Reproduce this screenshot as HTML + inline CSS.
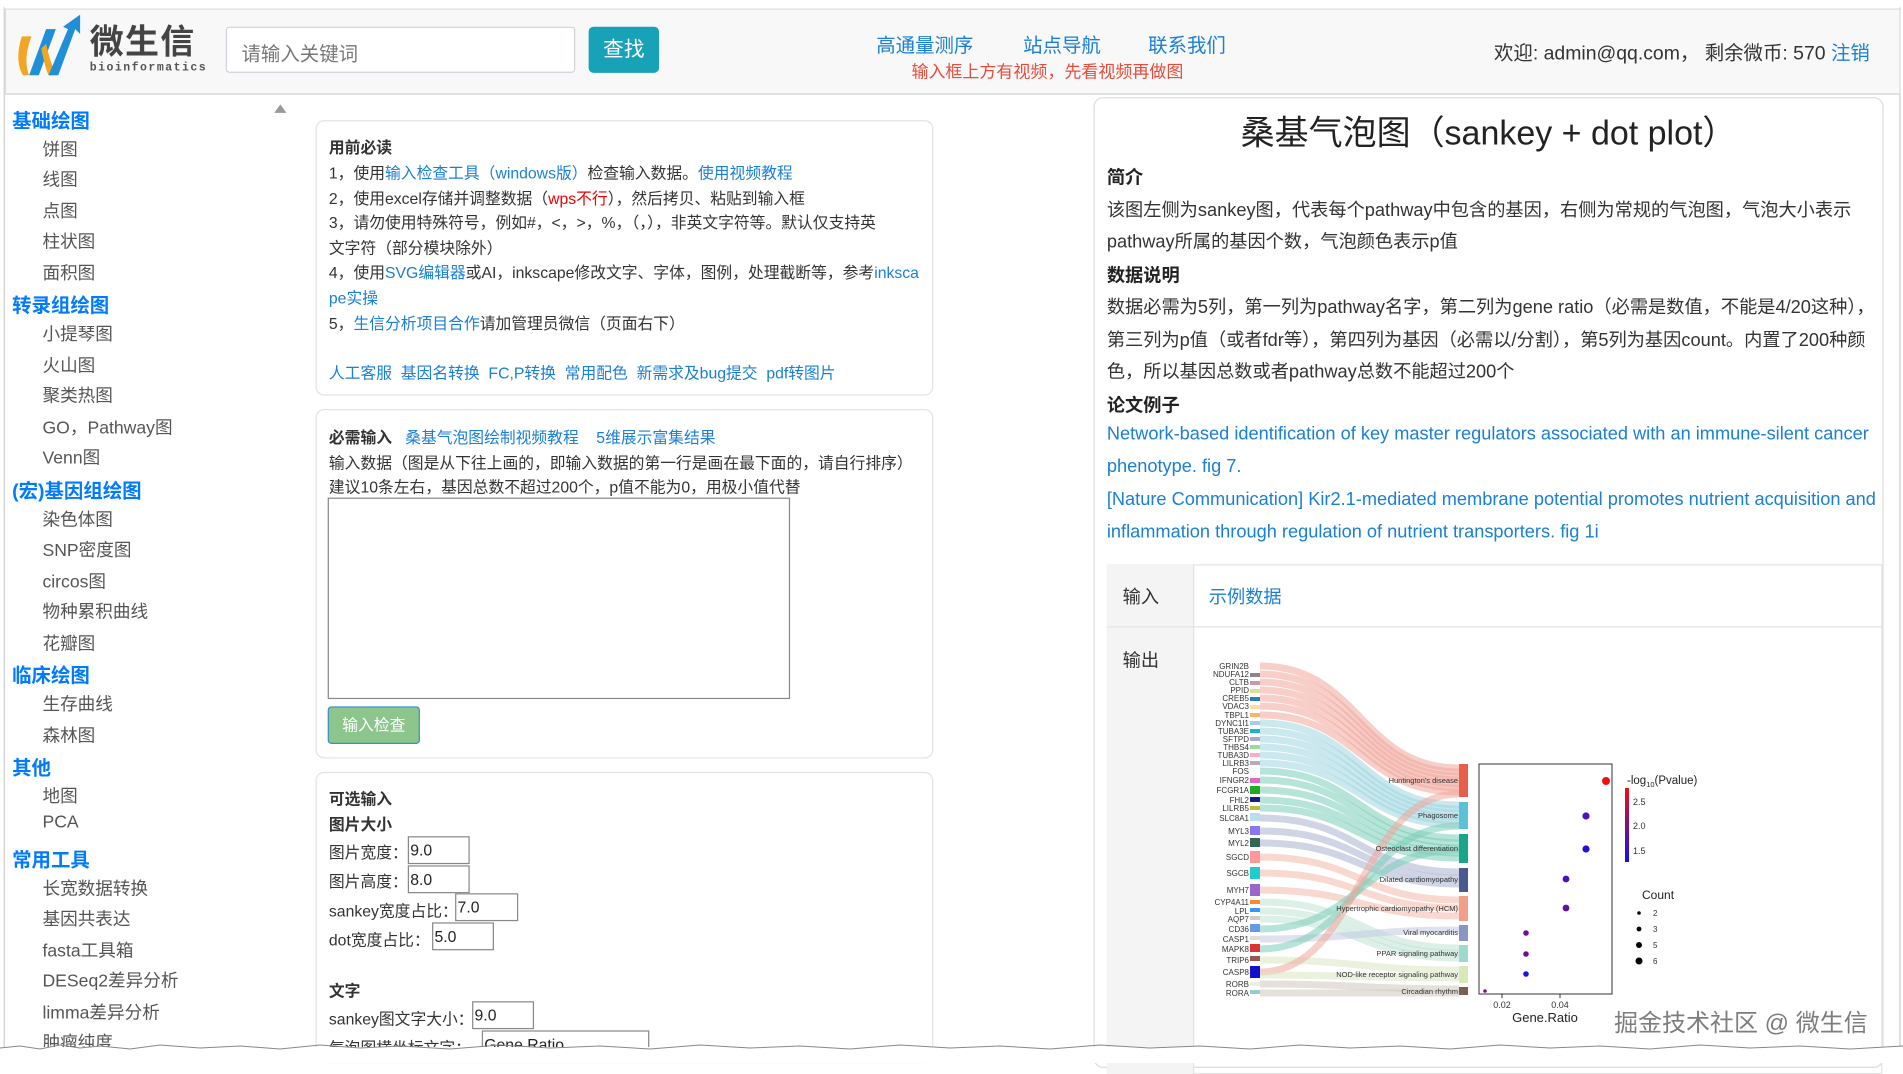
<!DOCTYPE html>
<html><head><meta charset="utf-8">
<style>
*{box-sizing:border-box;margin:0;padding:0}
body{width:1903px;height:1063px;overflow:hidden;background:#fff;font-family:"Liberation Sans","Noto Sans CJK SC",sans-serif;position:relative}
#w{position:absolute;left:0;top:0;width:1568px;height:876px;transform:scale(1.21365);transform-origin:0 0}
.a{position:absolute;white-space:nowrap}
.lk{color:#1a7fd6 !important}
#hdr{position:absolute;left:4px;top:7px;width:1562px;height:71px;background:#f8f8f8;border:1px solid #ddd;border-bottom:1px solid #d0d0d0}
.side-h{position:absolute;left:10px;font-size:16px;font-weight:bold;color:#007bff}
.side-i{position:absolute;left:35px;font-size:14.5px;color:#555}
.card{position:absolute;left:260px;width:509px;border:1px solid #e3e3e3;border-radius:7px;background:#fff}
.t{position:absolute;left:271px;font-size:13px;color:#333;white-space:nowrap}
.inp{position:absolute;height:23px;border:1px solid #888;background:#fff;font-size:13px;padding:3px 1px;color:#222}
.r{position:absolute;left:912px;font-size:15px;color:#333;white-space:nowrap}
.rb{font-weight:bold;color:#222}
</style></head><body>
<div id="w">
<div style="position:absolute;left:3px;top:6px;width:1563px;height:860px;border-left:1px solid #ccc;border-right:1px solid #ccc"></div>
<div id="hdr"></div>
<svg class="a" style="left:10px;top:10px" width="60" height="56" viewBox="0 0 60 56">
<path d="M8 20 C4 32 4 44 9 52 L14 52 C10 42 12 30 16 20 Z" fill="#f2a623"/>
<path d="M14 52 L28 14 L36 14 L22 52 Z" fill="#1f8fd8"/>
<path d="M24 30 C26 40 28 48 30 52 L36 52 C33 44 30 36 28 26 Z" fill="#f2a623"/>
<path d="M30 52 L46 14 L42 12 L56 2 L56 18 L52 14 L38 52 Z" fill="#1f8fd8"/>
</svg>
<div class="a" style="left:74px;top:13px;font-size:28px;font-weight:bold;color:#444;letter-spacing:1px">微生信</div>
<div class="a" style="left:74px;top:50px;font-size:9.5px;font-weight:bold;color:#555;letter-spacing:1.2px;font-family:'Liberation Mono',monospace">bioinformatics</div>
<div class="a" style="left:186px;top:22px;width:288px;height:38px;border:1px solid #ced4da;background:#fff;border-radius:3px;font-size:16px;color:#777;padding:8px 12px">请输入关键词</div>
<div class="a" style="left:485px;top:22px;width:58px;height:38px;background:#17a2b8;border-radius:4px;color:#fff;font-size:17px;text-align:center;line-height:38px">查找</div>
<div class="a lk" style="left:722px;top:24px;font-size:16px">高通量测序</div>
<div class="a lk" style="left:843px;top:24px;font-size:16px">站点导航</div>
<div class="a lk" style="left:946px;top:24px;font-size:16px">联系我们</div>
<div class="a" style="left:751px;top:49px;font-size:14px;color:#e74c3c">输入框上方有视频，先看视频再做图</div>
<div class="a" style="left:1231px;top:30px;font-size:16px;color:#333">欢迎: admin@qq.com， 剩余微币: 570 <span class="lk">注销</span></div>

<!-- sidebar -->
<div class="a" style="left:226px;top:86px;width:0;height:0;border-left:5px solid transparent;border-right:5px solid transparent;border-bottom:7px solid #999"></div>
<div class="side-h" style="top:86px">基础绘图</div>
<div class="side-i" style="top:112px">饼图</div>
<div class="side-i" style="top:137px">线图</div>
<div class="side-i" style="top:163px">点图</div>
<div class="side-i" style="top:188px">柱状图</div>
<div class="side-i" style="top:214px">面积图</div>
<div class="side-h" style="top:238px">转录组绘图</div>
<div class="side-i" style="top:264px">小提琴图</div>
<div class="side-i" style="top:290px">火山图</div>
<div class="side-i" style="top:315px">聚类热图</div>
<div class="side-i" style="top:341px">GO，Pathway图</div>
<div class="side-i" style="top:366px">Venn图</div>
<div class="side-h" style="top:391px">(宏)基因组绘图</div>
<div class="side-i" style="top:417px">染色体图</div>
<div class="side-i" style="top:442px">SNP密度图</div>
<div class="side-i" style="top:468px">circos图</div>
<div class="side-i" style="top:493px">物种累积曲线</div>
<div class="side-i" style="top:519px">花瓣图</div>
<div class="side-h" style="top:543px">临床绘图</div>
<div class="side-i" style="top:569px">生存曲线</div>
<div class="side-i" style="top:595px">森林图</div>
<div class="side-h" style="top:619px">其他</div>
<div class="side-i" style="top:645px">地图</div>
<div class="side-i" style="top:670px">PCA</div>
<div class="side-h" style="top:695px">常用工具</div>
<div class="side-i" style="top:721px">长宽数据转换</div>
<div class="side-i" style="top:746px">基因共表达</div>
<div class="side-i" style="top:772px">fasta工具箱</div>
<div class="side-i" style="top:797px">DESeq2差异分析</div>
<div class="side-i" style="top:823px">limma差异分析</div>
<div class="side-i" style="top:848px">肿瘤纯度</div>

<!-- middle -->
<div class="card" style="top:99px;height:227px"></div>
<div class="t" style="top:111px;font-weight:bold">用前必读</div>
<div class="t" style="top:132px">1，使用<span class="lk">输入检查工具（windows版）</span>检查输入数据。<span class="lk">使用视频教程</span></div>
<div class="t" style="top:153px">2，使用excel存储并调整数据（<span style="color:#e00">wps不行</span>），然后拷贝、粘贴到输入框</div>
<div class="t" style="top:173px">3，请勿使用特殊符号，例如#，&lt;，&gt;，%，（，），非英文字符等。默认仅支持英</div>
<div class="t" style="top:194px">文字符（部分模块除外）</div>
<div class="t" style="top:214px">4，使用<span class="lk">SVG编辑器</span>或AI，inkscape修改文字、字体，图例，处理截断等，参考<span class="lk">inksca</span></div>
<div class="t lk" style="top:235px">pe实操</div>
<div class="t" style="top:256px">5，<span class="lk">生信分析项目合作</span>请加管理员微信（页面右下）</div>
<div class="t lk" style="top:297px">人工客服 &nbsp;基因名转换 &nbsp;FC,P转换 &nbsp;常用配色 &nbsp;新需求及bug提交 &nbsp;pdf转图片</div>

<div class="card" style="top:337px;height:288px"></div>
<div class="t" style="top:350px"><b>必需输入</b> &nbsp;&nbsp;<span class="lk">桑基气泡图绘制视频教程</span> &nbsp;&nbsp;&nbsp;<span class="lk">5维展示富集结果</span></div>
<div class="t" style="top:371px">输入数据（图是从下往上画的，即输入数据的第一行是画在最下面的，请自行排序）</div>
<div class="t" style="top:391px">建议10条左右，基因总数不超过200个，p值不能为0，用极小值代替</div>
<div class="a" style="left:270px;top:410px;width:381px;height:166px;border:1px solid #888;background:#fff"></div>
<div class="a" style="left:270px;top:582px;width:76px;height:31px;background:#8cc68c;border:1px solid #3b8fc4;border-radius:3px;color:#fff;font-size:13px;text-align:center;line-height:29px">输入检查</div>

<div class="card" style="top:636px;height:240px"></div>
<div class="t" style="top:648px;font-weight:bold">可选输入</div>
<div class="t" style="top:669px;font-weight:bold">图片大小</div>
<div class="t" style="top:692px">图片宽度：</div><div class="inp" style="left:336px;top:689px;width:51px">9.0</div>
<div class="t" style="top:716px">图片高度：</div><div class="inp" style="left:336px;top:713px;width:51px">8.0</div>
<div class="t" style="top:740px">sankey宽度占比：</div><div class="inp" style="left:375px;top:736px;width:52px">7.0</div>
<div class="t" style="top:764px">dot宽度占比：</div><div class="inp" style="left:356px;top:760px;width:51px">5.0</div>
<div class="t" style="top:806px;font-weight:bold">文字</div>
<div class="t" style="top:829px">sankey图文字大小：</div><div class="inp" style="left:389px;top:825px;width:51px">9.0</div>
<div class="t" style="top:853px">气泡图横坐标文字：</div><div class="inp" style="left:397px;top:849px;width:138px">Gene.Ratio</div>

<!-- right -->
<div class="a" style="left:901px;top:80px;width:651px;height:800px;border:1px solid #ddd;border-radius:8px;background:#fff"></div>
<div class="a" style="left:901px;top:88px;width:651px;text-align:center;font-size:28px;color:#222">桑基气泡图（sankey + dot plot）</div>
<div class="r rb" style="top:135px">简介</div>
<div class="r" style="top:162px">该图左侧为sankey图，代表每个pathway中包含的基因，右侧为常规的气泡图，气泡大小表示</div>
<div class="r" style="top:188px">pathway所属的基因个数，气泡颜色表示p值</div>
<div class="r rb" style="top:216px">数据说明</div>
<div class="r" style="top:242px">数据必需为5列，第一列为pathway名字，第二列为gene ratio（必需是数值，不能是4/20这种），</div>
<div class="r" style="top:269px">第三列为p值（或者fdr等），第四列为基因（必需以/分割），第5列为基因count。内置了200种颜</div>
<div class="r" style="top:295px">色，所以基因总数或者pathway总数不能超过200个</div>
<div class="r rb" style="top:323px">论文例子</div>
<div class="r lk" style="top:349px">Network-based identification of key master regulators associated with an immune-silent cancer</div>
<div class="r lk" style="top:376px">phenotype. fig 7.</div>
<div class="r lk" style="top:403px">[Nature Communication] Kir2.1-mediated membrane potential promotes nutrient acquisition and</div>
<div class="r lk" style="top:430px">inflammation through regulation of nutrient transporters. fig 1i</div>
<div class="a" style="left:912px;top:465px;width:639px;height:420px;border:1px solid #e3e3e3"></div>
<div class="a" style="left:912px;top:465px;width:72px;height:420px;background:#f4f4f4;border-right:1px solid #e3e3e3"></div>
<div class="a" style="left:912px;top:516px;width:639px;height:1px;background:#e3e3e3"></div>
<div class="a" style="left:925px;top:481px;font-size:15px;color:#333">输入</div>
<div class="a lk" style="left:996px;top:481px;font-size:15px">示例数据</div>
<div class="a" style="left:925px;top:533px;font-size:15px;color:#333">输出</div>
</div>

<!-- chart in original coords -->
<svg style="position:absolute;left:0;top:0" width="1903" height="1063" font-family="Liberation Sans,sans-serif">
<g fill="none" stroke-opacity="0.55" stroke-width="7">
<path d="M1260 666 C1360 666 1360 768 1459 768" stroke="#f0a59a"/>
<path d="M1260 674 C1360 674 1360 772 1459 772" stroke="#f0a59a"/>
<path d="M1260 682 C1360 682 1360 776 1459 776" stroke="#f0a59a"/>
<path d="M1260 690 C1360 690 1360 780 1459 780" stroke="#f0a59a"/>
<path d="M1260 698 C1360 698 1360 784 1459 784" stroke="#f0a59a"/>
<path d="M1260 706 C1360 706 1360 788 1459 788" stroke="#f0a59a"/>
<path d="M1260 715 C1360 715 1360 792 1459 792" stroke="#f0a59a"/>
<path d="M1260 723 C1360 723 1360 805 1459 805" stroke="#9fd6e0"/>
<path d="M1260 731 C1360 731 1360 809 1459 809" stroke="#9fd6e0"/>
<path d="M1260 739 C1360 739 1360 813 1459 813" stroke="#9fd6e0"/>
<path d="M1260 747 C1360 747 1360 817 1459 817" stroke="#9fd6e0"/>
<path d="M1260 755 C1360 755 1360 821 1459 821" stroke="#9fd6e0"/>
<path d="M1260 763 C1360 763 1360 825 1459 825" stroke="#9fd6e0"/>
<path d="M1260 771 C1360 771 1360 838 1459 838" stroke="#7ccdb8"/>
<path d="M1260 780 C1360 780 1360 843 1459 843" stroke="#7ccdb8"/>
<path d="M1260 790 C1360 790 1360 848 1459 848" stroke="#7ccdb8"/>
<path d="M1260 800 C1360 800 1360 853 1459 853" stroke="#7ccdb8"/>
<path d="M1260 808 C1360 808 1360 858 1459 858" stroke="#7ccdb8"/>
<path d="M1260 818 C1360 818 1360 872 1459 872" stroke="#a8b2cf"/>
<path d="M1260 831 C1360 831 1360 878 1459 878" stroke="#a8b2cf"/>
<path d="M1260 843 C1360 843 1360 884 1459 884" stroke="#a8b2cf"/>
<path d="M1260 857 C1360 857 1360 900 1459 900" stroke="#f4b8aa"/>
<path d="M1260 873 C1360 873 1360 908 1459 908" stroke="#f4b8aa"/>
<path d="M1260 890 C1360 890 1360 916 1459 916" stroke="#f4b8aa"/>
<path d="M1260 902 C1360 902 1360 948 1459 948" stroke="#bfe3d6"/>
<path d="M1260 911 C1360 911 1360 953 1459 953" stroke="#bfe3d6"/>
<path d="M1260 919 C1360 919 1360 958 1459 958" stroke="#bfe3d6"/>
<path d="M1260 929 C1360 929 1360 850 1459 850" stroke="#7ccdb8"/>
<path d="M1260 939 C1360 939 1360 930 1459 930" stroke="#c4cbe0"/>
<path d="M1260 949 C1360 949 1360 826 1459 826" stroke="#7ccdb8"/>
<path d="M1260 960 C1360 960 1360 970 1459 970" stroke="#d8e6bf"/>
<path d="M1260 972 C1360 972 1360 794 1459 794" stroke="#f0a59a"/>
<path d="M1260 975 C1360 975 1360 978 1459 978" stroke="#d8e6bf"/>
<path d="M1260 984 C1360 984 1360 989 1459 989" stroke="#cfc6bb"/>
<path d="M1260 993 C1360 993 1360 993 1459 993" stroke="#cfc6bb"/>
</g>
<g font-size="8" fill="#333" text-anchor="end">
<text x="1249" y="669">GRIN2B</text><text x="1249" y="677">NDUFA12</text><text x="1249" y="685">CLTB</text><text x="1249" y="693">PPID</text><text x="1249" y="701">CREB5</text><text x="1249" y="709">VDAC3</text><text x="1249" y="718">TBPL1</text><text x="1249" y="726">DYNC1I1</text><text x="1249" y="734">TUBA3E</text><text x="1249" y="742">SFTPD</text><text x="1249" y="750">THBS4</text><text x="1249" y="758">TUBA3D</text><text x="1249" y="766">LILRB3</text><text x="1249" y="774">FOS</text><text x="1249" y="783">IFNGR2</text><text x="1249" y="793">FCGR1A</text><text x="1249" y="803">FHL2</text><text x="1249" y="811">LILRB5</text><text x="1249" y="821">SLC8A1</text><text x="1249" y="834">MYL3</text><text x="1249" y="846">MYL2</text><text x="1249" y="860">SGCD</text><text x="1249" y="876">SGCB</text><text x="1249" y="893">MYH7</text><text x="1249" y="905">CYP4A11</text><text x="1249" y="914">LPL</text><text x="1249" y="922">AQP7</text><text x="1249" y="932">CD36</text><text x="1249" y="942">CASP1</text><text x="1249" y="952">MAPK8</text><text x="1249" y="963">TRIP6</text><text x="1249" y="975">CASP8</text><text x="1249" y="987">RORB</text><text x="1249" y="996">RORA</text>
</g>
<g>
<rect x="1250" y="673" width="10" height="4" fill="#888"/><rect x="1250" y="681" width="10" height="4" fill="#c9a"/><rect x="1250" y="689" width="10" height="4" fill="#dd9"/><rect x="1250" y="697" width="10" height="4" fill="#2a7fb8"/><rect x="1250" y="705" width="10" height="4" fill="#fde0a0"/><rect x="1250" y="713" width="10" height="4" fill="#f9b36a"/><rect x="1250" y="721" width="10" height="4" fill="#a6cee3"/><rect x="1250" y="729" width="10" height="4" fill="#20b2c8"/><rect x="1250" y="737" width="10" height="4" fill="#aac"/><rect x="1250" y="745" width="10" height="4" fill="#9d9"/><rect x="1250" y="753" width="10" height="4" fill="#fac"/><rect x="1250" y="761" width="10" height="4" fill="#bab"/><rect x="1250" y="778" width="10" height="5" fill="#d6c"/><rect x="1250" y="786" width="10" height="8" fill="#2a2"/><rect x="1250" y="797" width="10" height="5" fill="#1a1a8a"/><rect x="1250" y="806" width="10" height="4" fill="#bb4"/><rect x="1250" y="813" width="10" height="8" fill="#bde"/><rect x="1250" y="826" width="10" height="9" fill="#87e"/><rect x="1250" y="838" width="10" height="9" fill="#365"/><rect x="1250" y="851" width="10" height="12" fill="#f99"/><rect x="1250" y="867" width="10" height="12" fill="#2cc"/><rect x="1250" y="884" width="10" height="12" fill="#96c"/><rect x="1250" y="900" width="10" height="4" fill="#f83"/><rect x="1250" y="908" width="10" height="4" fill="#39f"/><rect x="1250" y="916" width="10" height="4" fill="#ccc"/><rect x="1250" y="924" width="10" height="8" fill="#69e"/><rect x="1250" y="936" width="10" height="4" fill="#ddd"/><rect x="1250" y="944" width="10" height="8" fill="#d33"/><rect x="1250" y="956" width="10" height="5" fill="#955"/><rect x="1250" y="966" width="10" height="12" fill="#11c"/><rect x="1250" y="982" width="10" height="4" fill="#eed"/><rect x="1250" y="990" width="10" height="4" fill="#9cc"/>
</g>
<g>
<rect x="1459" y="764" width="9" height="33" fill="#e8604c"/><rect x="1459" y="802" width="9" height="27" fill="#5bc0d8"/><rect x="1459" y="834" width="9" height="29" fill="#1aa58a"/><rect x="1459" y="868" width="9" height="24" fill="#4a5a90"/><rect x="1459" y="896" width="9" height="25" fill="#f0a08a"/><rect x="1459" y="925" width="9" height="16" fill="#8a96c0"/><rect x="1459" y="945" width="9" height="17" fill="#9fd8cc"/><rect x="1459" y="966" width="9" height="17" fill="#d9e8b8"/><rect x="1459" y="987" width="9" height="8" fill="#7a6050"/>
</g>
<g font-size="7.5" fill="#333" text-anchor="end">
<text x="1458" y="783">Huntington's disease</text><text x="1458" y="818">Phagosome</text><text x="1458" y="851">Osteoclast differentiation</text><text x="1458" y="882">Dilated cardiomyopathy</text><text x="1458" y="911">Hypertrophic cardiomyopathy (HCM)</text><text x="1458" y="935">Viral myocarditis</text><text x="1458" y="956">PPAR signaling pathway</text><text x="1458" y="977">NOD-like receptor signaling pathway</text><text x="1458" y="994">Circadian rhythm</text>
</g>
<rect x="1479" y="764" width="133" height="230" fill="none" stroke="#333" stroke-width="1"/>
<circle cx="1606" cy="781" r="4" fill="#ee1010"/><circle cx="1586" cy="816" r="3.6" fill="#5010c0"/><circle cx="1586" cy="849" r="3.6" fill="#2010d8"/><circle cx="1566" cy="879" r="3.4" fill="#4a10c0"/><circle cx="1566" cy="908" r="3.4" fill="#6010a8"/><circle cx="1526" cy="933" r="2.8" fill="#701090"/><circle cx="1526" cy="954" r="2.8" fill="#701090"/><circle cx="1526" cy="974" r="2.8" fill="#2010e0"/><circle cx="1485" cy="991" r="1.8" fill="#801088"/>
<line x1="1502" y1="994" x2="1502" y2="998" stroke="#333"/><line x1="1560" y1="994" x2="1560" y2="998" stroke="#333"/>
<g font-size="9" fill="#333" text-anchor="middle"><text x="1502" y="1008">0.02</text><text x="1560" y="1008">0.04</text></g>
<text x="1545" y="1022" font-size="13" fill="#222" text-anchor="middle">Gene.Ratio</text>
<defs><linearGradient id="cg" x1="0" y1="0" x2="0" y2="1"><stop offset="0" stop-color="#ee1010"/><stop offset="1" stop-color="#1010ee"/></linearGradient></defs>
<text x="1627" y="784" font-size="11.5" fill="#222">-log<tspan font-size="7.5" dy="3">10</tspan><tspan dy="-3">(Pvalue)</tspan></text>
<rect x="1625" y="788" width="4" height="74" fill="url(#cg)"/>
<g font-size="9" fill="#333"><text x="1633" y="805">2.5</text><text x="1633" y="829">2.0</text><text x="1633" y="854">1.5</text></g>
<text x="1642" y="899" font-size="12" fill="#222">Count</text>
<circle cx="1639" cy="913" r="1.8"/><circle cx="1639" cy="929" r="2.4"/><circle cx="1639" cy="945" r="3"/><circle cx="1639" cy="961" r="3.5"/>
<g font-size="8" fill="#333"><text x="1653" y="916">2</text><text x="1653" y="932">3</text><text x="1653" y="948">5</text><text x="1653" y="964">6</text></g>
<text x="1614" y="1031" font-size="24" fill="#666" fill-opacity="0.85" font-family="Liberation Sans,Noto Sans CJK SC,sans-serif">掘金技术社区 @ 微生信</text>
<rect x="0" y="1047" width="1903" height="16" fill="#fff"/>
<polyline points="0,1048 20,1046 40,1049 60,1045 80,1048 100,1046 130,1049 160,1045 200,1048 240,1046 280,1049 320,1045 360,1048 400,1046 450,1049 500,1045 550,1048 600,1046 650,1049 700,1045 750,1048 800,1046 850,1049 900,1045 950,1048 1000,1046 1050,1049 1100,1045 1150,1048 1200,1046 1250,1049 1300,1045 1350,1048 1400,1046 1450,1049 1500,1045 1550,1048 1600,1046 1650,1049 1700,1045 1750,1048 1800,1046 1850,1049 1903,1046" fill="none" stroke="#888" stroke-width="1"/>
</svg>
</body></html>
